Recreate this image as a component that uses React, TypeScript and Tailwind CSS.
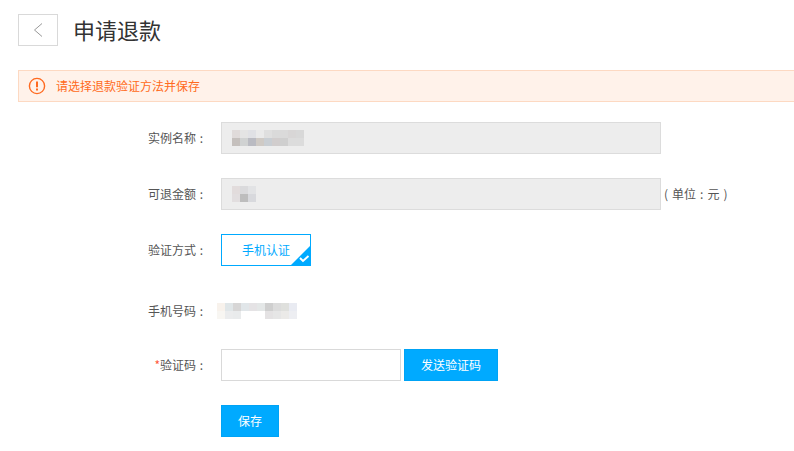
import type { ReactNode } from 'react';

const NAME_MOSAIC = [
  ['#e0dbda', '#e4e4e4', '#e0e1e5', '#eaeaea', '#dfdfdf', '#dadada', '#dadada', '#d8d6d6', '#d8d8d8'],
  ['#c5c0bd', '#d0d2d2', '#babbc2', '#cfcac5', '#c9ced3', '#d1cdcd', '#cfcfcf', '#dcdcdc', '#dcdcdc'],
];
const AMOUNT_MOSAIC = [
  ['#e2dcdc', '#dadadc', '#e2e3e5'],
  ['#e2dedf', '#bdbdbd', '#d8d9dd'],
];
const PHONE_MOSAIC = [
  ['#f8f2ec', '#e0e6e8', '#d7d6d6', '#e1e6e9', '#e5e3e5', '#e4e7e7', '#cfcfcf', '#dcdcdc', '#dfe0dd', '#e9ebf2'],
  ['#f8f6f2', '#ebeced', '#e9ebec', '#ffffff', '#ffffff', '#ffffff', '#e4e2e3', '#e6e6e6', '#ebeae8', '#edeef2'],
];

function Mosaic({ cells, className }: { cells: string[][]; className?: string }) {
  const w = cells[0].length * 8;
  return (
    <svg width={w} height={16} viewBox={`0 0 ${w} 16`} shapeRendering="crispEdges" className={className}>
      {cells.map((row, y) =>
        row.map((fill, x) => <rect key={`${x}-${y}`} x={x * 8} y={y * 8} width={8} height={8} fill={fill} />)
      )}
    </svg>
  );
}

function Row({ label, required, className, children }: { label: string; required?: boolean; className?: string; children: ReactNode }) {
  return (
    <div className={`flex items-center ${className ?? ''}`}>
      <label className="w-[190px] flex justify-end text-[12px] leading-none text-[#555]">
        {required && <span className="text-[#ff5a3c]">*</span>}
        {label}
        <span className="w-[12px] text-right pr-[5px]">:</span>
      </label>
      <div className="ml-[13px] flex items-center">{children}</div>
    </div>
  );
}

export default function App() {
  return (
    <div className="w-[794px] h-[451px] overflow-hidden bg-white pl-[18px] pt-[14px] font-['Noto_Sans_CJK_SC','Noto_Sans',sans-serif]">
      {/* Header */}
      <div className="flex items-center h-[32px]">
        <button className="w-[40px] h-[32px] flex items-center justify-center border border-[#d9d9d9] bg-white">
          <svg width="10" height="16" viewBox="0 0 10 16" fill="none">
            <path d="M9 1.5L1.5 8L9 14.5" stroke="#999" strokeWidth="1" />
          </svg>
        </button>
        <h1 className="ml-[15px] mb-[3px] text-[22px] leading-none font-normal text-[#333]">申请退款</h1>
      </div>

      {/* Notice */}
      <div className="mt-[24px] h-[32px] w-[800px] flex items-center border border-[#fdd9c2] bg-[#fff2ea] text-[#ff6a20]">
        <svg width="18" height="18" viewBox="0 0 18 18" fill="none" className="ml-[9px]">
          <circle cx="9" cy="9" r="7.6" stroke="#ff6a20" strokeWidth="1.4" />
          <path d="M9 4.6v5.6" stroke="#ff6a20" strokeWidth="2" />
          <path d="M9 11.4v2" stroke="#ff6a20" strokeWidth="2" />
        </svg>
        <span className="ml-[10px] text-[12px] leading-none">请选择退款验证方法并保存</span>
      </div>

      {/* Form */}
      <div className="mt-[20px]">
        <Row label="实例名称">
          <div className="w-[440px] h-[32px] flex items-center border border-[#dcdcdc] bg-[#ededed] pl-[10px]">
            <Mosaic cells={NAME_MOSAIC} />
          </div>
        </Row>

        <Row label="可退金额" className="mt-[24px]">
          <div className="w-[440px] h-[32px] flex items-center border border-[#dcdcdc] bg-[#ededed] pl-[10px]">
            <Mosaic cells={AMOUNT_MOSAIC} />
          </div>
          <span className="ml-[3px] flex gap-[4px] text-[12px] leading-none text-[#555]">
            <span>(</span>
            <span>单位</span>
            <span>:</span>
            <span>元</span>
            <span>)</span>
          </span>
        </Row>

        <Row label="验证方式" className="mt-[24px]">
          <div className="relative w-[90px] h-[32px] flex items-center justify-center border border-[#00aaff] bg-white text-[12px] leading-none text-[#00aaff]">
            手机认证
            <svg width="21" height="21" viewBox="0 0 21 21" className="absolute right-[-1px] bottom-[-1px]">
              <path d="M21 0V21H0Z" fill="#00aaff" />
              <path d="M10 13l3 3L18.5 11" fill="none" stroke="#fff" strokeWidth="1.9" />
            </svg>
          </div>
        </Row>

        <Row label="手机号码" className="mt-[29px] h-[32px]">
          <Mosaic cells={PHONE_MOSAIC} className="ml-[-4px]" />
        </Row>

        <Row label="验证码" required className="mt-[22px]">
          <input className="w-[180px] h-[32px] border border-[#d9d9d9] bg-white outline-none" />
          <button className="ml-[3px] w-[94px] h-[32px] border border-[#00a3f5] bg-[#00aaff] text-[12px] leading-none text-white">发送验证码</button>
        </Row>

        <div className="mt-[24px] ml-[203px]">
          <button className="block w-[58px] h-[32px] border border-[#00a3f5] bg-[#00aaff] text-[12px] leading-none text-white">保存</button>
        </div>
      </div>
    </div>
  );
}
